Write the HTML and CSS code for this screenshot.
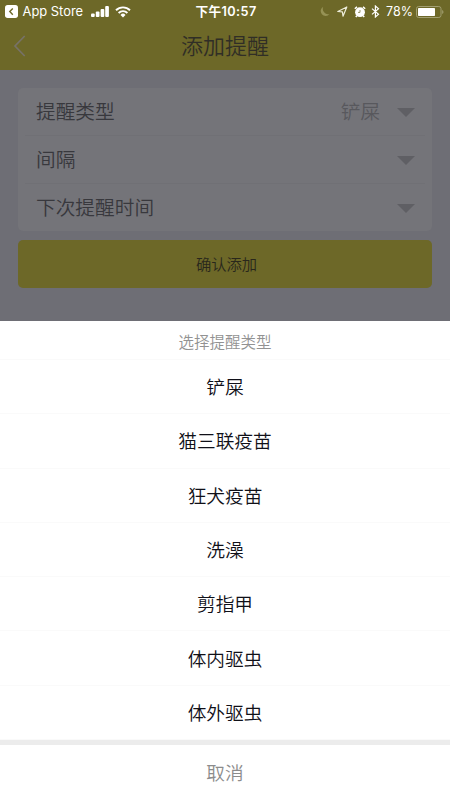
FILE: index.html
```html
<!DOCTYPE html>
<html lang="zh-CN">
<head>
<meta charset="utf-8">
<title>添加提醒</title>
<link rel="stylesheet" href="styles.css">
</head>
<body>
<main class="screen">
  <header class="header">
    <div class="status">
      <div class="status-left">
        <svg class="back-app" width="13" height="13" viewBox="0 0 13 13"><rect width="13" height="13" rx="2.7" fill="#fff"/><path d="M7.8 3.5 4.8 6.6l3 3.1" fill="none" stroke="#6d6828" stroke-width="1.4"/></svg>
        <span class="app-name">App Store</span>
        <svg class="signal" width="18" height="12" viewBox="0 0 18 12" fill="#fff"><rect y="7.5" width="3.7" height="3.5" rx="1"/><rect x="4.8" y="5.5" width="3.7" height="5.5" rx="1"/><rect x="9.6" y="2.9" width="3.7" height="8.1" rx="1"/><rect x="14.2" y="0" width="3.7" height="11" rx="1"/></svg>
        <svg class="wifi" width="16" height="12" viewBox="0 0 16 12"><g fill="none" stroke="#fff" stroke-width="1.9"><path d="M1 4.2a10 10 0 0 1 14 0"/><path d="M3.6 7a6.2 6.2 0 0 1 8.8 0"/></g><path d="M5.5 8.9a3.5 3.5 0 0 1 5 0L8 11.5z" fill="#fff"/></svg>
      </div>
      <span class="clock">下午10:57</span>
      <div class="status-right">
        <svg class="moon" width="10" height="11" viewBox="0 0 10 11"><path d="M3.3.7A5.3 5.3 0 0 0 9.5 8 4.9 4.9 0 1 1 3.3.7z" fill="#969255"/></svg>
        <svg class="arrow" width="11" height="11" viewBox="0 0 11 11"><path d="M.8 5.5 9.8 1 6 10.2 5.4 5.8z" fill="none" stroke="#eeeedc" stroke-width="1.2" stroke-linejoin="round"/></svg>
        <svg class="alarm" width="12" height="12" viewBox="0 0 12 12"><circle cx="6" cy="6.2" r="4.9" fill="#fff"/><path d="M.8 2.8 3 .9M9 .9l2.2 1.9M2.8 9.8l-1 1.2M9.2 9.8l1 1.2" stroke="#fff" stroke-width="1.5"/><path d="M6 4v2.4H4" stroke="#6d6828" fill="none" stroke-width=".7"/></svg>
        <svg class="bluetooth" width="9" height="13" viewBox="0 0 9 13"><path d="m1 3.6 6.5 5.7L4.4 12V1l3.1 2.7L1 9.4" fill="none" stroke="#fff" stroke-width="1.2"/></svg>
        <span class="percent">78%</span>
        <svg class="battery" width="28" height="12" viewBox="0 0 28 12"><rect x=".5" y=".5" width="24.5" height="11" rx="2.2" fill="none" stroke="#a29f71"/><rect x="2" y="2" width="17" height="8" rx=".7" fill="#fff"/><path d="M26.2 4v4c1.7-.7 1.7-3.3 0-4z" fill="#a29f71"/></svg>
      </div>
    </div>
    <div class="nav">
      <svg class="nav-back" width="14" height="22" viewBox="0 0 14 22"><path d="M11.7 1 2 11l9.7 10" fill="none" stroke="#777268" stroke-width="1.7"/></svg>
      <h1 class="nav-title">添加提醒</h1>
    </div>
  </header>

  <section class="form">
    <div class="card">
      <div class="row"><span>提醒类型</span><span class="value">铲屎</span><i class="caret"></i></div>
      <div class="row"><span>间隔</span><i class="caret"></i></div>
      <div class="row"><span>下次提醒时间</span><i class="caret"></i></div>
    </div>
    <button class="submit">确认添加</button>
  </section>

  <section class="sheet">
    <h2 class="sheet-title">选择提醒类型</h2>
    <ul class="options">
      <li>铲屎</li>
      <li>猫三联疫苗</li>
      <li>狂犬疫苗</li>
      <li>洗澡</li>
      <li>剪指甲</li>
      <li>体内驱虫</li>
      <li>体外驱虫</li>
    </ul>
    <button class="cancel">取消</button>
  </section>
</main>
</body>
</html>
```
FILE: styles.css
```css
* { box-sizing: border-box; }

body {
  margin: 0;
  font-family: "Noto Sans CJK SC", sans-serif;
}

h1, h2, ul { margin: 0; padding: 0; font-weight: 350; }
button { border: 0; padding: 0; font-family: inherit; }

.screen {
  width: 450px;
  height: 800px;
  display: flex;
  flex-direction: column;
  overflow: hidden;
  background: #6e6e75;
}

.header { height: 70px; flex: none; background: #6d6828; }

.status {
  height: 23px;
  display: grid;
  grid-template-columns: 1fr auto 1fr;
  align-items: center;
  padding: 0 6px 0 5px;
  color: #fff;
  font-family: Inter, "Noto Sans CJK SC", sans-serif;
  font-size: 12.9px;
  line-height: 23px;
}

.status-left, .status-right { display: flex; align-items: center; }
.status-right { justify-content: flex-end; }
.app-name { width: 60px; margin-left: 4.5px; white-space: nowrap; }
.signal { margin-left: 8.5px; }
.wifi { margin-left: 6px; }
.clock { padding-left: 3px; font-weight: 600; font-size: 12.7px; letter-spacing: 0.4px; }
.arrow { margin-left: 7px; }
.alarm { margin-left: 6px; }
.bluetooth { margin-left: 5px; }
.percent { width: 26px; margin-left: 6px; font-size: 12.5px; white-space: nowrap; }
.battery { margin-left: 4px; }

.nav {
  height: 47px;
  display: grid;
  grid-template-columns: 40px 1fr 40px;
  align-items: start;
}
.nav-back { margin: 12px 0 0 12.5px; }
.nav-title {
  color: #302e26;
  font-size: 22px;
  line-height: 43px;
  text-align: center;
}

.form {
  height: 251px;
  flex: none;
  padding: 18px 18px 0;
}

.card {
  height: 143px;
  padding: 0 7px;
  border-radius: 5px;
  background: #747479;
}

.row {
  height: 48px;
  display: flex;
  align-items: center;
  padding: 0 10px 2px 11px;
  border-bottom: 1px solid #707075;
  color: #38383d;
  font-size: 19.7px;
  font-weight: 350;
}
.row:last-child { height: 47px; border-bottom: 0; }

.value { margin-left: auto; color: #58585d; }

.caret {
  margin-left: auto;
  margin-top: 3px;
  border: 9.5px solid transparent;
  border-top-color: #5f5f64;
  border-bottom: 0;
}
.value + .caret { margin-left: 17px; }

.submit {
  display: block;
  width: 100%;
  height: 48px;
  margin-top: 9px;
  padding: 0 0 2px 3px;
  border-radius: 5px;
  background: #6d6828;
  color: #29271c;
  font-size: 15.3px;
  font-weight: 350;
}

.sheet { height: 479px; flex: none; background: #fff; }

.sheet-title {
  height: 39px;
  border-bottom: 1px solid #fafafa;
  color: #929292;
  font-size: 15.5px;
  line-height: 40px;
  text-align: center;
}

.options {
  height: 380px;
  display: grid;
  grid-template-rows: repeat(7, 1fr);
  list-style: none;
}
.options li {
  display: flex;
  align-items: center;
  justify-content: center;
  padding-bottom: 2px;
  border-bottom: 1px solid #fafafa;
  color: #101018;
  font-size: 18.7px;
  font-weight: 350;
}

.cancel {
  display: block;
  width: 100%;
  height: 60px;
  padding-bottom: 2px;
  border-top: 5px solid #ececec;
  background: #fff;
  color: #8c8c8c;
  font-size: 18.7px;
  font-weight: 350;
}
```
